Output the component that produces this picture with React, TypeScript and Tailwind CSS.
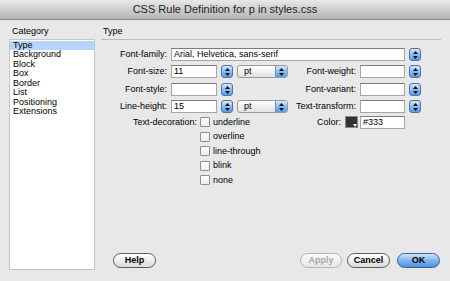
import React from 'react';

const font = { fontFamily: '"Liberation Sans", Arial, sans-serif' };

function Stepper() {
  return (
    <div className="flex h-[13px] w-[12px] shrink-0 flex-col items-center justify-center gap-[2px] rounded-[3px] border border-[#4f72a8] bg-gradient-to-b from-[#d6e8fc] via-[#8dbcf0] to-[#5b9ae6]">
      <svg width="5" height="3" viewBox="0 0 5 3">
        <path d="M2.5 0 L5 3 L0 3 Z" fill="#111" />
      </svg>
      <svg width="5" height="3" viewBox="0 0 5 3">
        <path d="M0 0 L5 0 L2.5 3 Z" fill="#111" />
      </svg>
    </div>
  );
}

function Field({ value, w }: { value?: string; w: string }) {
  return (
    <div className={`${w} flex h-[13px] shrink-0 items-center border border-[#a5a5a5] border-t-[#7c7c7c] bg-white pl-[2px] text-[9px] leading-none text-black`}>
      {value}
    </div>
  );
}

function UnitSelect() {
  return (
    <div className="flex h-[13px] w-[51px] shrink-0 items-stretch overflow-hidden rounded-[3px] border border-[#9a9a9a] bg-gradient-to-b from-white to-[#e2e2e2]">
      <div className="flex flex-1 items-center pl-[6px] text-[9px] leading-none">pt</div>
      <div className="flex w-[12px] flex-col items-center justify-center gap-[2px] border-l border-[#6f8fc0] bg-gradient-to-b from-[#d6e8fc] via-[#8dbcf0] to-[#5b9ae6]">
        <svg width="5" height="3" viewBox="0 0 5 3">
          <path d="M2.5 0 L5 3 L0 3 Z" fill="#111" />
        </svg>
        <svg width="5" height="3" viewBox="0 0 5 3">
          <path d="M0 0 L5 0 L2.5 3 Z" fill="#111" />
        </svg>
      </div>
    </div>
  );
}

function Check({ label }: { label: string }) {
  return (
    <div className="flex h-[14.5px] items-center gap-[3px]">
      <div className="h-[10px] w-[10px] rounded-[1px] border border-[#8e8e8e] bg-gradient-to-b from-white to-[#ececec]" />
      <span className="text-[9px] leading-none">{label}</span>
    </div>
  );
}

function PillButton({ children, kind }: { children: React.ReactNode; kind?: 'disabled' | 'default' }) {
  if (kind === 'default') {
    return (
      <div className="flex h-[15px] w-[43px] items-center justify-center rounded-full border border-[#3b5f99] bg-gradient-to-b from-[#cfe4fb] via-[#7fb3ec] to-[#4d94e3] text-[9px] font-bold text-black">
        {children}
      </div>
    );
  }
  if (kind === 'disabled') {
    return (
      <div className="flex h-[15px] w-[42px] items-center justify-center rounded-full border border-[#b4b4b4] bg-gradient-to-b from-[#fbfbfb] to-[#e6e6e6] text-[9px] font-bold text-[#a8a8a8]">
        {children}
      </div>
    );
  }
  return (
    <div className="flex h-[15px] w-[43px] items-center justify-center rounded-full border border-[#5c5c5c] bg-gradient-to-b from-white to-[#dcdcdc] text-[9px] font-bold text-black">
      {children}
    </div>
  );
}

const categories = ['Type', 'Background', 'Block', 'Box', 'Border', 'List', 'Positioning', 'Extensions'];

export default function App() {
  return (
    <div className="flex h-[281px] w-[450px] flex-col overflow-hidden bg-[#e8e8e8] text-black" style={font}>
      {/* Title bar */}
      <div className="flex h-[20px] shrink-0 items-center justify-center border-b border-[#8a8a8a] bg-gradient-to-b from-[#e9e9e9] to-[#b4b4b4] text-[11px] text-[#1e1e1e]">
        CSS Rule Definition for p in styles.css
      </div>

      <div className="flex flex-1 pt-[6px]">
        {/* Category column */}
        <div className="flex w-[95px] shrink-0 flex-col pl-[9px]">
          <div className="h-[11px] pl-[3px] text-[9px] leading-[11px]">Category</div>
          <div className="mt-[2px] h-[231px] border border-[#c6c6c6] bg-white pt-px">
            {categories.map((c, i) => (
              <div
                key={c}
                className={`h-[9.45px] pl-[3px] text-[9px] leading-[9.45px] ${i === 0 ? 'bg-[#b5d5fe]' : ''}`}
              >
                {c}
              </div>
            ))}
          </div>
        </div>

        {/* Type panel */}
        <div className="ml-[6px] flex w-[340px] flex-col">
          <div className="h-[14px] border-b border-[#bdbdbd] pl-[2px] text-[9px] leading-[11px]">Type</div>

          <div className="mt-[8px] flex flex-col pr-[20px]">
            {/* Font-family */}
            <div className="flex h-[13px] items-center gap-[4px]">
              <div className="w-[66px] text-right text-[9px]">Font-family:</div>
              <Field value="Arial, Helvetica, sans-serif" w="w-[234px]" />
              <Stepper />
            </div>

            {/* Font-size */}
            <div className="mt-[4px] flex h-[13px] items-center gap-[4px]">
              <div className="w-[66px] text-right text-[9px]">Font-size:</div>
              <Field value="11" w="w-[46px]" />
              <Stepper />
              <UnitSelect />
              <div className="flex-1 text-right text-[9px]">Font-weight:</div>
              <Field w="w-[45px]" />
              <Stepper />
            </div>

            {/* Font-style */}
            <div className="mt-[5px] flex h-[13px] items-center gap-[4px]">
              <div className="w-[66px] text-right text-[9px]">Font-style:</div>
              <Field w="w-[46px]" />
              <Stepper />
              <div className="w-[51px]" />
              <div className="flex-1 text-right text-[9px]">Font-variant:</div>
              <Field w="w-[45px]" />
              <Stepper />
            </div>

            {/* Line-height */}
            <div className="mt-[4px] flex h-[13px] items-center gap-[4px]">
              <div className="w-[66px] text-right text-[9px]">Line-height:</div>
              <Field value="15" w="w-[46px]" />
              <Stepper />
              <UnitSelect />
              <div className="flex-1 text-right text-[9px]">Text-transform:</div>
              <Field w="w-[45px]" />
              <Stepper />
            </div>

            {/* Text-decoration + Color */}
            <div className="mt-[2px] flex">
              <div className="flex h-[14.5px] w-[96px] items-center justify-end text-[9px]">Text-decoration:</div>
              <div className="ml-[3px] flex w-[100px] flex-col">
                <Check label="underline" />
                <Check label="overline" />
                <Check label="line-through" />
                <Check label="blink" />
                <Check label="none" />
              </div>
              <div className="flex h-[14.5px] flex-1 items-center justify-end">
                <span className="mr-[4px] text-[9px]">Color:</span>
                <div className="relative h-[12px] w-[13px] border border-[#8a8a8a] bg-[#333]">
                  <svg className="absolute right-0 bottom-0" width="4" height="3" viewBox="0 0 4 3">
                    <path d="M0 0 L4 0 L2 3 Z" fill="#fff" />
                  </svg>
                </div>
                <div className="ml-[2px] flex h-[13px] w-[45px] items-center border border-[#a5a5a5] border-t-[#7c7c7c] bg-white pl-[2px] text-[9px] leading-none">
                  #333
                </div>
                <div className="w-[16px]" />
              </div>
            </div>
          </div>

          {/* Buttons */}
          <div className="mt-auto mb-[13px] flex items-center pr-[1px] pl-[12px]">
            <PillButton>Help</PillButton>
            <div className="flex-1" />
            <div className="flex items-center gap-[5px]">
              <PillButton kind="disabled">Apply</PillButton>
              <PillButton>Cancel</PillButton>
              <div className="ml-[2px]">
                <PillButton kind="default">OK</PillButton>
              </div>
            </div>
          </div>
        </div>
      </div>
    </div>
  );
}
